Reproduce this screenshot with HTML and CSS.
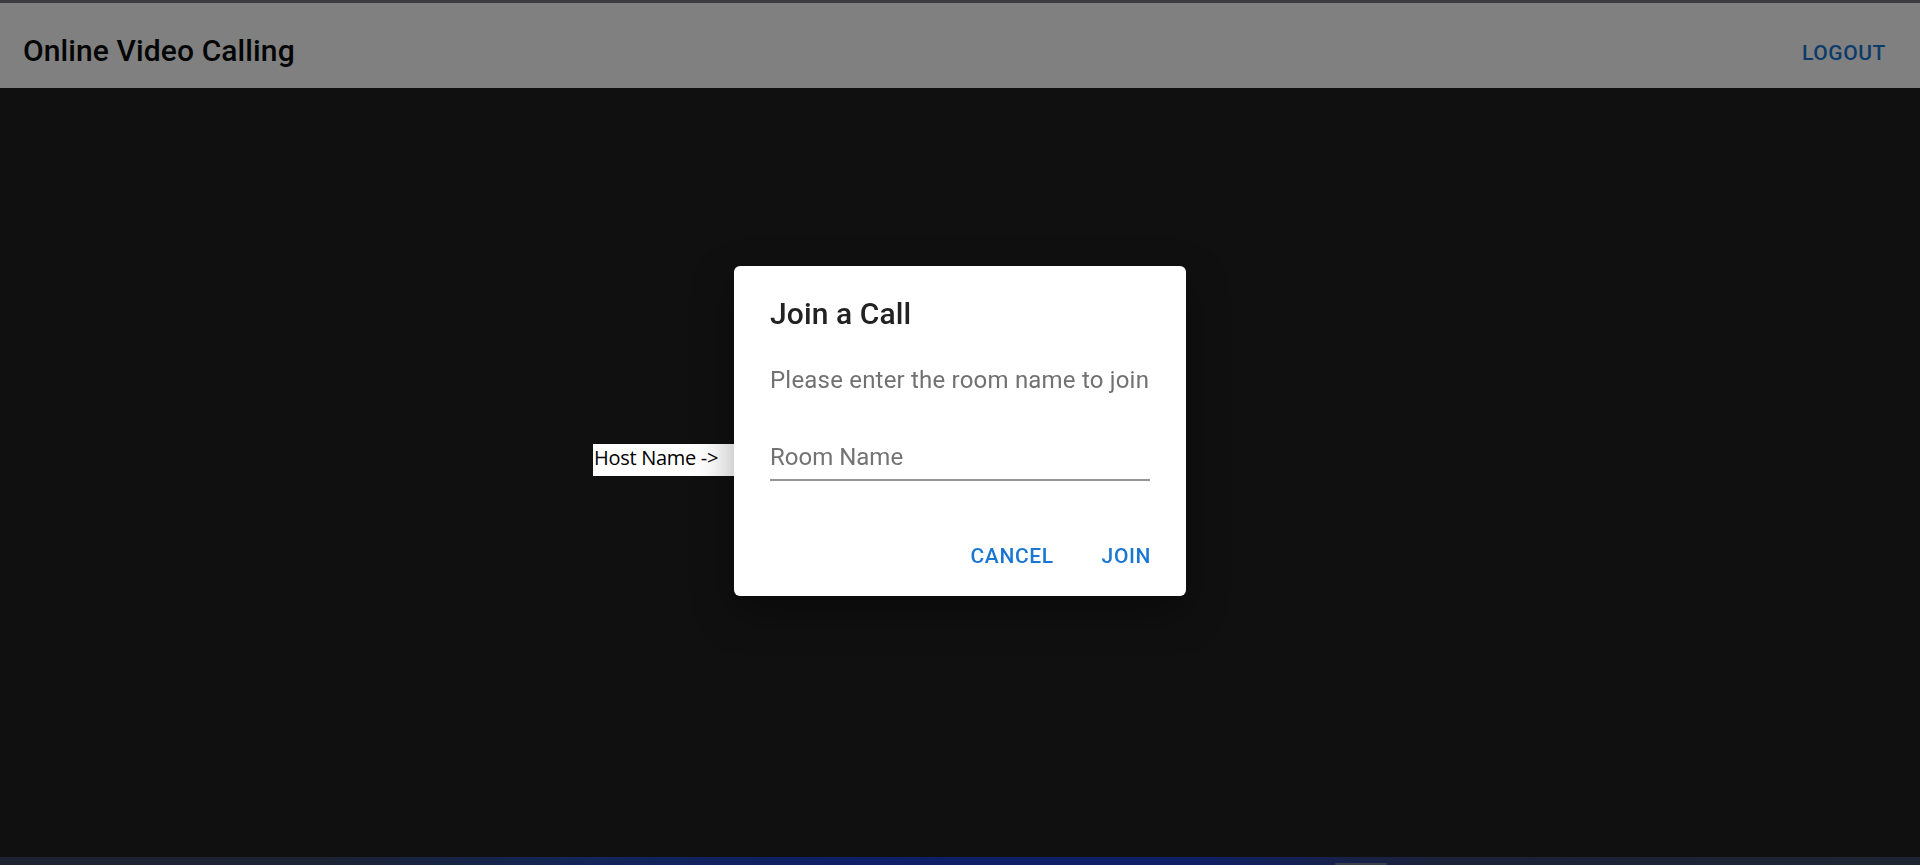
FILE: index.html
```html
<!DOCTYPE html>
<html lang="en">
<head>
<meta charset="utf-8">
<title>Online Video Calling</title>
<link rel="stylesheet" href="styles.css">
</head>
<body>
<div class="page">
  <header class="appbar">
    <h1 class="brand">Online Video Calling</h1>
    <button class="logout">Logout</button>
  </header>
  <main class="stage"></main>
  <div class="taskstrip"><span class="task-tab"></span></div>
</div>

<div class="annotation">Host Name -&gt;</div>

<div class="modal">
  <div class="dialog">
    <h2 class="dialog-title">Join a Call</h2>
    <p class="dialog-text">Please enter the room name to join</p>
    <div class="field">
      <span class="field-label">Room Name</span>
    </div>
    <div class="actions">
      <button class="text-btn">Cancel</button>
      <button class="text-btn">Join</button>
    </div>
  </div>
</div>
</body>
</html>
```

FILE: styles.css
```css
* { box-sizing: border-box; }

html, body {
  margin: 0;
  padding: 0;
  height: 865px;
  overflow: hidden;
  background: #111011;
  font-family: Roboto, "Liberation Sans", sans-serif;
}

.page {
  display: flex;
  flex-direction: column;
  height: 865px;
}

.appbar {
  flex: 0 0 88px;
  display: flex;
  justify-content: space-between;
  align-items: flex-start;
  border-top: 3px solid #3d3d3f;
  background: #808080;
  padding: 24px 34px 0 23px;
}

.brand {
  margin: 0;
  font-size: 30px;
  line-height: 48px;
  font-weight: 500;
  color: #050505;
  letter-spacing: 0.1px;
}

.logout {
  margin: 0;
  margin-top: 8px;
  padding: 0;
  border: 0;
  background: transparent;
  font-family: Roboto, "Liberation Sans", sans-serif;
  font-size: 21px;
  line-height: 36px;
  font-weight: 500;
  letter-spacing: 0.6px;
  text-transform: uppercase;
  color: #0c3b69;
}

.stage {
  flex: 1;
  background: #111011;
}

.taskstrip {
  flex: 0 0 8px;
  position: relative;
  background: linear-gradient(90deg,
    #1d2331 0%, #1c2333 17%, #132558 30%, #0f1f68 45%,
    #0f1f66 62%, #1b2238 75%, #1e2532 100%);
}

.task-tab {
  position: absolute;
  left: 1335px;
  bottom: 0;
  width: 52px;
  height: 2px;
  background: #3a3f4c;
  border-radius: 1px;
}

.annotation {
  position: absolute;
  left: 593px;
  top: 444px;
  width: 170px;
  height: 32px;
  background: #ffffff;
  color: #000;
  font-family: "Open Sans", Lato, sans-serif;
  font-size: 20px;
  line-height: 28px;
  letter-spacing: -0.3px;
  padding-left: 1px;
}

.modal {
  position: fixed;
  inset: 0;
  display: flex;
  align-items: center;
  justify-content: center;
  padding-bottom: 3px;
}

.dialog {
  width: 452px;
  height: 330px;
  background: #ffffff;
  border-radius: 6px;
  padding: 24px 36px 0 36px;
  display: flex;
  flex-direction: column;
  box-shadow: 0 16px 40px rgba(0, 0, 0, 0.35);
}

.dialog-title {
  margin: 0;
  font-size: 30px;
  line-height: 48px;
  font-weight: 500;
  color: #222222;
  letter-spacing: 0.1px;
}

.dialog-text {
  margin: 24px 0 0 0;
  font-size: 24px;
  line-height: 36px;
  font-weight: 400;
  color: #717171;
  white-space: nowrap;
  letter-spacing: 0.2px;
}

.field {
  margin-top: 41px;
  padding-bottom: 4px;
  border-bottom: 2px solid #949494;
}

.field-label {
  display: block;
  font-size: 24px;
  line-height: 36px;
  color: #737373;
}

.actions {
  margin-top: 57px;
  display: flex;
  justify-content: flex-end;
  gap: 48px;
  margin-right: -1px;
}

.text-btn {
  margin: 0;
  padding: 0;
  border: 0;
  background: transparent;
  font-family: Roboto, "Liberation Sans", sans-serif;
  font-size: 21px;
  line-height: 36px;
  font-weight: 500;
  letter-spacing: 0.6px;
  text-transform: uppercase;
  color: #1976d2;
}
```
